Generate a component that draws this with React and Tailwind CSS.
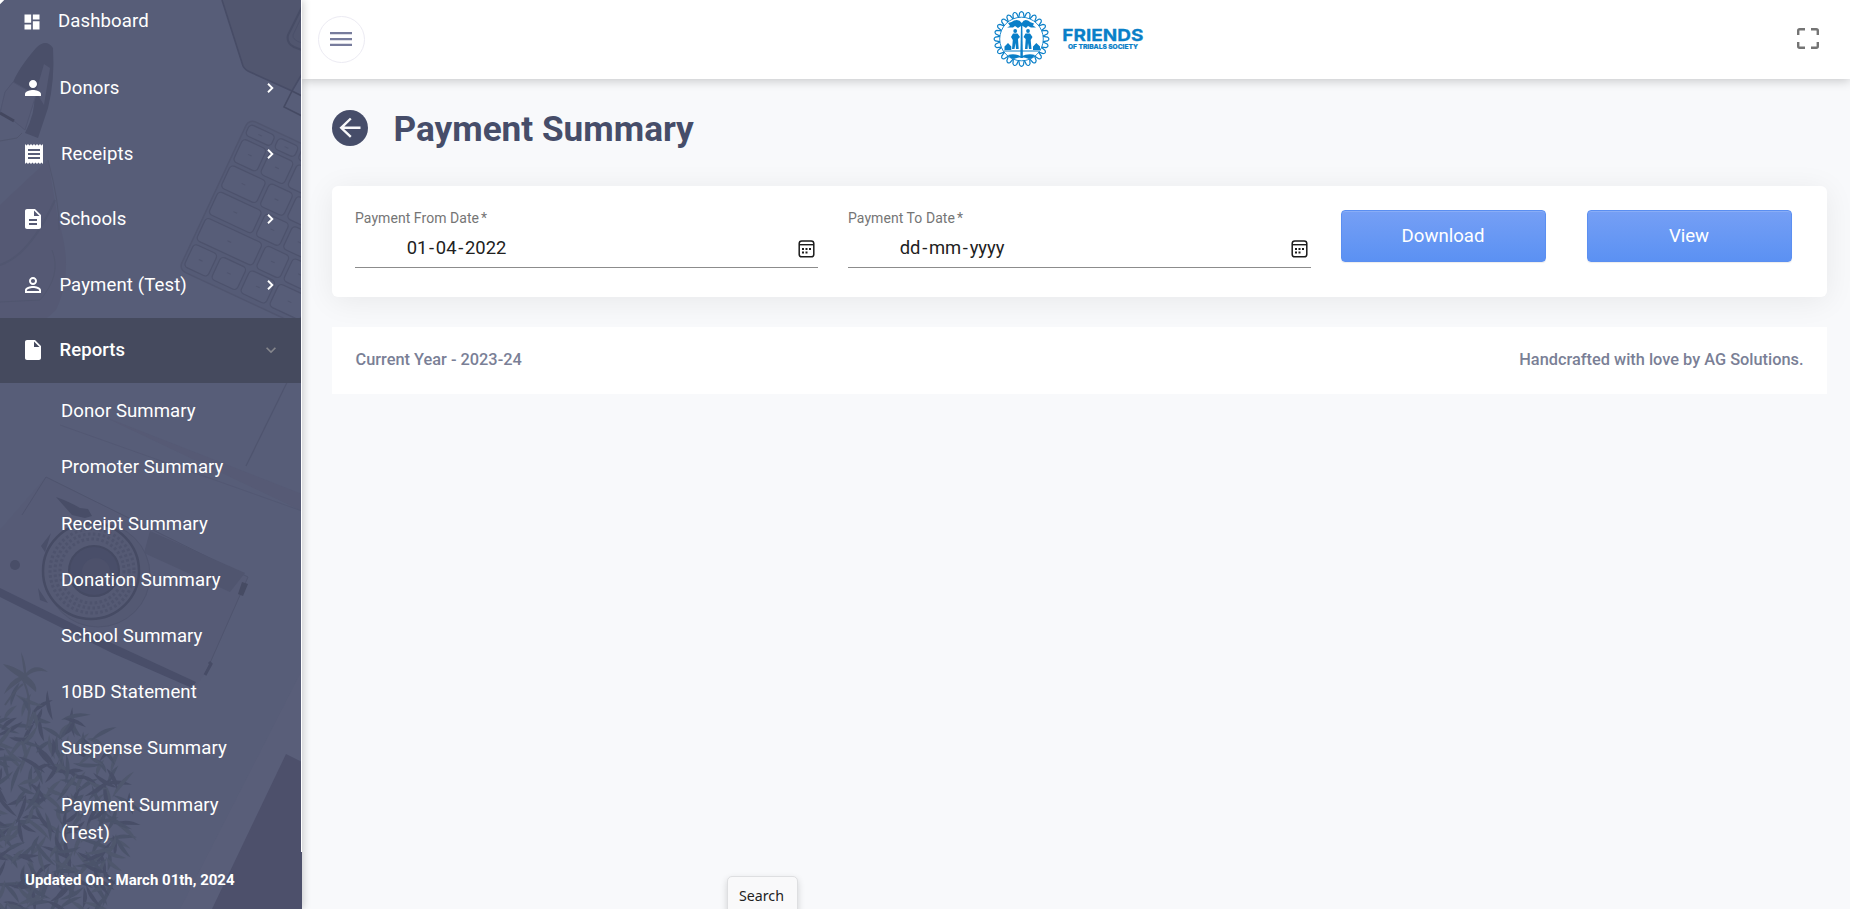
import React from "react";
import {
  MdDashboard,
  MdPerson,
  MdReceipt,
  MdPersonOutline,
  MdInsertDriveFile,
  MdDescription,
  MdKeyboardArrowDown,
} from "react-icons/md";

const menu = [
  { label: "Donors", Icon: MdPerson, pad: "pl-[21px]", gap: "pl-[14.4px]" },
  { label: "Receipts", Icon: MdReceipt, pad: "pl-[22px]", gap: "pl-[15px]" },
  { label: "Schools", Icon: MdDescription, pad: "pl-[21px]", gap: "pl-[14.4px]" },
  { label: "Payment (Test)", Icon: MdPersonOutline, pad: "pl-[21px]", gap: "pl-[14.4px]" },
];

const reports = [
  "Donor Summary",
  "Promoter Summary",
  "Receipt Summary",
  "Donation Summary",
  "School Summary",
  "10BD Statement",
  "Suspense Summary",
  "Payment Summary (Test)",
];

const keyRows = [
  { y: 4, h: 12, xs: [[3, 28], [35, 22], [61, 22]] },
  { y: 20, h: 25, xs: [[3, 26], [33, 26], [63, 26]] },
  { y: 49, h: 25, xs: [[3, 39], [46, 26], [76, 26], [106, 26]] },
  { y: 78, h: 25, xs: [[3, 48], [55, 26], [85, 26], [115, 26]] },
  { y: 107, h: 25, xs: [[3, 62], [69, 26], [99, 26], [129, 26]] },
  { y: 136, h: 25, xs: [[3, 26], [33, 28], [65, 28], [97, 34], [135, 30]] },
];

const LEAF_COUNT = 420;
const leaves = Array.from({ length: LEAF_COUNT }, (_, i) => {
  const a = (i * 137.5 * Math.PI) / 180;
  const r = Math.sqrt(i / LEAF_COUNT);
  return {
    x: 28 + Math.cos(a) * r * 102 + ((i * 29) % 13) - 6,
    y: 825 + Math.sin(a) * r * 122 + ((i * 17) % 15) - 7,
    rot: (i * i * 31 + i * 97) % 360,
    len: 18 + ((i * 7) % 17),
    tone: i % 3,
  };
});

function DeskArt() {
  return (
    <svg className="absolute inset-0" width="302" height="909" viewBox="0 0 302 909" fill="none">
      <rect width="302" height="909" fill="#575d78" />
      <path d="M0 205L48 160L58 220Q75 270 56 310Q30 335 0 335Z" fill="#555974" />
      <path d="M48 160Q60 205 59 230M52 250Q62 275 40 300L0 302" stroke="#51566f" />
      <path d="M0 265Q30 255 55 200" stroke="#515670" strokeWidth="2" />
      {/* watch */}
      <path d="M36 48Q46 38 53 48Q55 80 48 108L38 138L25 133Q36 112 34 95L12 85Q17 70 36 48Z" fill="#4a4f69" />
      <path d="M44 64L50 68L44 105L36 92Z" fill="#545974" />
      <path d="M5 92L13 82L36 95L25 130L14 121L0 113Z" fill="#565b76" stroke="#505570" />
      <path d="M0 113L14 121" stroke="#43475f" strokeWidth="3" />
      <path d="M0 141L17 138L22 133" stroke="#50556e" />
      {/* laptop and drive */}
      <path d="M222 0L243 66Q245 70 250 72L292 91L302 74V0Z" fill="#51566f" />
      <path d="M222 0L243 66Q245 70 250 72L292 91L302 74" stroke="#474c66" strokeWidth="1.6" />
      <path d="M302 7L288 35Q286 43 294 47L302 50" stroke="#474c65" strokeWidth="2" />
      <path d="M302 16L293 35Q292 40 302 43" stroke="#4b506a" />
      <path d="M292 91L284 107L302 116M292 91L302 96" stroke="#454a63" strokeWidth="1.6" />
      {/* keyboard */}
      <g transform="translate(249 119) rotate(25)">
        <rect width="220" height="166" rx="7" fill="#555b76" stroke="#50556f" strokeWidth="1.4" />
        {keyRows.map((row) =>
          row.xs.map(([x, w]) => (
            <g key={`${row.y}-${x}`}>
              <rect x={x} y={row.y} width={w} height={row.h} rx="4" fill="#575d78" stroke="#4d526c" strokeWidth="1.2" />
              <path d={`M${x + w / 2 - 2} ${row.y + row.h / 2}h4`} stroke="#4f546e" />
            </g>
          ))
        )}
      </g>
      <path d="M302 352L246 466" stroke="#4f546e" strokeWidth="1.2" />
      <path d="M100 415L302 494L302 511Z" fill="#565a75" />
      <path d="M60 425L302 511" stroke="#535873" />
      {/* camera */}
      <path d="M46 477L248 577L206 672L196 686L118 650L0 592V530Z" fill="#565b76" />
      <path d="M46 477L22 515M46 477L248 577L206 672" stroke="#4f546e" />
      <path d="M56 497Q70 502 80 508L88 509L92 516L85 518L72 515Z" fill="#484d67" />
      <path d="M150 531L245 573L230 592L144 553Z" fill="#50556f" />
      <path d="M242 582L248 584L243 596L238 594Z" fill="#464b63" />
      <path d="M0 588L118 646L196 682L192 688L112 653L0 597Z" fill="#494e69" />
      <path d="M209 662L211 664L205 675" stroke="#474c66" strokeWidth="3" />
      <circle cx="15" cy="565" r="5" fill="#494e68" />
      <path d="M41 546L51 533L45 552ZM38 588L48 603L40 600Z" fill="#4a4f69" />
      <circle cx="98" cy="575" r="52" fill="#545973" stroke="#4f546e" />
      <circle cx="91" cy="571" r="48" fill="#555a74" stroke="#464b64" strokeWidth="2.5" />
      <circle cx="92" cy="571" r="42" stroke="#4e536d" strokeWidth="3" strokeDasharray="2.5 2.5" />
      <circle cx="92" cy="571" r="37" stroke="#4e536d" strokeWidth="3" strokeDasharray="2.5 2.5" />
      <circle cx="92" cy="571" r="32" stroke="#4e536d" strokeWidth="3" strokeDasharray="2.5 2.5" />
      <circle cx="94" cy="571" r="25" fill="#494e69" stroke="#454a63" strokeWidth="2" />
      <circle cx="96" cy="572" r="14" fill="#4d516b" />
      {/* notebook */}
      <path d="M302 670L180 909H302Z" fill="#595e79" />
      <path d="M286 754L302 762V909H212Z" fill="#4d506b" />
      {/* plant */}
      {leaves.map((l, i) => (
        <path
          key={i}
          transform={`translate(${l.x} ${l.y}) rotate(${l.rot})`}
          d={`M0 0Q${l.len / 2} -7 ${l.len} 1Q${l.len / 2} 1 0 0Z`}
          fill={l.tone === 0 ? "#484e67" : l.tone === 1 ? "#4f576d" : "#4b536a"}
        />
      ))}
      <path d="M24 673Q22 660 21 652Q26 662 26 673Q36 662 48 672Q36 669 27 676Q38 684 36 692L22 680Q8 690 4 694Q10 680 19 677Q8 670 3 664Q14 666 24 673Z" fill="#4e556b" />
      <path d="M22 678Q34 700 26 730M5 705Q15 690 23 684" stroke="#4e556b" strokeWidth="2" />
    </svg>
  );
}

function Chevron() {
  return (
    <svg width="7" height="10" viewBox="0 0 7 10" fill="none" stroke="#fff" strokeWidth="1.9">
      <path d="M1 0.8L5.3 5L1 9.2" />
    </svg>
  );
}

function Sidebar() {
  return (
    <aside className="relative z-20 h-[909px] w-[302px] shrink-0 overflow-hidden text-white shadow-[1px_0_8px_rgba(0,0,0,0.2)]">
      <DeskArt />
      <div className="relative flex h-[852px] flex-col overflow-hidden border-r border-white text-[18.6px] tracking-[0.1px]">
        <div className="flex h-[55px] shrink-0 items-center pb-[12px] pl-[22px]">
          <MdDashboard size={20} />
          <span className="pl-[16px] pt-px">Dashboard</span>
        </div>
        {menu.map(({ label, Icon, pad, gap }) => (
          <div key={label} className={`flex h-[65.75px] shrink-0 items-center pr-[27px] ${pad}`}>
            <Icon size={24} />
            <span className={`grow pt-[2px] ${gap}`}>{label}</span>
            <Chevron />
          </div>
        ))}
        <div className="flex h-[65px] shrink-0 items-center bg-[#454a5e] pb-px pl-[21px] pr-[20px] font-medium">
          <MdInsertDriveFile size={24} />
          <span className="grow pl-[14.4px] pt-px text-[18.5px]">Reports</span>
          <MdKeyboardArrowDown size={20} className="text-[#85868c]" />
        </div>
        <div className="flex shrink-0 flex-col pt-[0.25px]">
          {reports.map((label) => (
            <div key={label} className="w-[260px] py-[14px] pl-[61px] leading-[28.2px] tracking-[0.06px]">
              {label}
            </div>
          ))}
        </div>
      </div>
      <div className="relative pl-[25px] pt-[17px] text-[15px] font-bold leading-[22px]">
        Updated On : March 01th, 2024
      </div>
      <div className="absolute left-[-3px] top-[-3px] size-[6px] rotate-45 bg-white" />
    </aside>
  );
}

const petals = Array.from({ length: 24 }, (_, i) => (i * 360) / 24);

function Logo() {
  return (
    <svg width="152" height="58" viewBox="992 10 152 58" fill="#0a7fc8">
      <g fill="none" stroke="#0a7fc8">
        <circle cx="1021.5" cy="39" r="21.8" strokeWidth="0.9" />
        {petals.map((a) => (
          <path
            key={a}
            transform={`rotate(${a} 1021.5 39)`}
            d="M1018.8 17.4L1019.6 13Q1021.5 10.2 1023.4 13L1024.2 17.4"
            strokeWidth="1.2"
          />
        ))}
      </g>
      <path d="M1021 24L1022.3 24L1022.9 58H1020.3Z" />
      <path d="M1021.8 23Q1019 18.5 1014 20.5Q1012 22 1008 23L1010 26L1007 27.5H1013L1015 26L1018 28L1021.8 25.5L1026 28L1028 26L1031 27.5H1036L1033 25.5L1034 23.5Q1030 22.5 1028 20.5Q1024 18.5 1021.8 23Z" />
      <circle cx="1015.2" cy="31" r="1.9" />
      <circle cx="1028" cy="31" r="1.9" />
      <path d="M1013 33.5H1017.5L1020 37L1018 39L1018.7 49H1016L1015.5 43L1014.5 49H1012L1012.8 40L1011 37Z" />
      <path d="M1025.5 33.5H1030L1032.5 37L1030.7 40L1031.5 49H1029L1028 43L1027.5 49H1025L1025.7 39L1023.5 37Z" />
      <path d="M1004.5 50V46.5L1008 43L1011.3 46.5V50ZM1033 50V46.5L1036.3 43L1040 46.5V50Z" />
      <path d="M1004 51H1039" stroke="#0a7fc8" strokeWidth="1" />
      <path d="M1008 55Q1015 53 1021 56.5Q1028 53 1035 55Q1033 58.5 1029 59Q1021.5 55.5 1014 59Q1010 58.5 1008 55Z" />
      <text x="1062.3" y="41.2" fontFamily="Inter, sans-serif" fontWeight="700" fontSize="16.6" stroke="#0a7fc8" strokeWidth=".3" textLength="81" lengthAdjust="spacingAndGlyphs">FRIENDS</text>
      <text x="1068" y="49.4" fontFamily="Inter, sans-serif" fontWeight="800" fontSize="6.6" stroke="#0a7fc8" strokeWidth=".2" textLength="70" lengthAdjust="spacingAndGlyphs">OF TRIBALS SOCIETY</text>
    </svg>
  );
}

function Header() {
  return (
    <header className="relative z-10 flex h-[79px] items-center bg-white pb-px pl-[16px] pr-[31px] shadow-[0_2px_10px_rgba(0,0,0,0.2)]">
      <button className="flex size-[47px] items-center justify-center rounded-full border border-[#ecebf3] pr-px">
        <svg width="22" height="14" viewBox="0 0 22 14" fill="#777c9c">
          <path d="M0 0h22v2.3H0zM0 5.9h22v2.3H0zM0 11.7h22v2.3H0z" />
        </svg>
      </button>
      <div className="ml-[627px] grow">
        <Logo />
      </div>
      <div className="pb-[2px]">
        <svg className="block" width="22" height="21" viewBox="0 0 22 21" fill="none" stroke="#747474" strokeWidth="2.4">
          <path d="M1.2 7V2.7Q1.2 1.2 2.7 1.2H8M14 1.2H19.3Q20.8 1.2 20.8 2.7V7M20.8 14V18.3Q20.8 19.8 19.3 19.8H14M8 19.8H2.7Q1.2 19.8 1.2 18.3V14" />
        </svg>
      </div>
    </header>
  );
}

function CalendarIcon() {
  return (
    <svg width="18" height="18" viewBox="0 0 18 18" fill="none" stroke="#1c1c1c">
      <rect x="1.2" y="1" width="14.6" height="15.8" rx="2.6" strokeWidth="1.5" />
      <path d="M1.2 4.7H15.8" strokeWidth="1.4" />
      <path d="M4 9h2M7.5 9h2M11 9h2M4 12.5h2M7.5 12.5h2" strokeWidth="2" />
    </svg>
  );
}

function DateField({ label, parts }) {
  return (
    <div className="flex h-[59px] w-[463px] flex-col border-b border-[#8c8c8c]">
      <div className="h-[20px] text-[14px] leading-[19px] tracking-[0.06px] text-[#757575]">
        {label}<span className="pl-[2px]">*</span>
      </div>
      <div className="flex grow items-center justify-between pl-[50.7px] pr-[2px]">
        <div className="flex text-[18.4px] leading-[26px] text-[#212121]">
          <span className="px-px">{parts[0]}</span>
          <span className="px-[0.7px]">-</span>
          <span className="px-px">{parts[1]}</span>
          <span className="px-[0.7px]">-</span>
          <span className="px-px">{parts[2]}</span>
        </div>
        <div className="pt-px">
          <CalendarIcon />
        </div>
      </div>
    </div>
  );
}

function ActionButton({ children }) {
  return (
    <button className="h-[52px] w-[205px] rounded-[4px] border border-[#5b8ff1] bg-linear-to-b from-[#759ff5] to-[#5b91f3] pr-px text-[18.6px] leading-[27px] text-white shadow-[inset_0_1px_0_rgba(255,255,255,0.15),0_1px_1px_rgba(0,0,0,0.075)]">
      {children}
    </button>
  );
}

export default function App() {
  return (
    <div className="relative flex h-[909px] w-[1850px] overflow-hidden bg-[#f8f9fb] font-['Roboto',sans-serif]">
      <Sidebar />
      <div className="flex grow flex-col">
        <Header />
        <main className="flex flex-col pl-[30px] pr-[23px]">
          <div className="flex h-[107px] items-center gap-[25.5px] pb-[9px]">
            <svg width="36" height="36" viewBox="0 0 36 36" fill="none">
              <circle cx="18" cy="18" r="18" fill="#464d69" />
              <path d="M28.5 17.8H9.2M18.8 8.5L9.2 17.8L18.8 26.8" stroke="#f8f9fb" strokeWidth="2.4" />
            </svg>
            <h1 className="pt-[2px] text-[35.15px] font-bold leading-[44px] text-[#464d69]">Payment Summary</h1>
          </div>
          <section className="flex h-[111px] rounded-[6px] bg-white pl-[23px] pt-[23px] shadow-[0_4px_30px_rgba(0,0,0,0.07)]">
            <div className="flex gap-[30px]">
              <DateField label="Payment From Date" parts={["01", "04", "2022"]} />
              <DateField label="Payment To Date" parts={["dd", "mm", "yyyy"]} />
            </div>
            <div className="ml-[30px] mt-px flex gap-[41px]">
              <ActionButton>Download</ActionButton>
              <ActionButton>View</ActionButton>
            </div>
          </section>
          <footer className="relative mt-[30px] flex h-[67px] items-center justify-between bg-white px-[23.5px] pb-px text-[16.35px] font-medium text-[#7a7f96]">
            <span>Current Year - 2023-24</span>
            <span>Handcrafted with love by AG Solutions.</span>
          </footer>
        </main>
      </div>
      <div className="absolute left-[727px] top-[876px] z-30 h-[40px] w-[71px] rounded-[5px] border border-[#dedfe1] bg-[#f9f9fa] pt-[8px] pr-[2px] text-center font-['Noto_Sans',sans-serif] text-[14.2px] leading-[22px] text-[#222] shadow-[0_3px_7px_rgba(0,0,0,0.16)]">
        Search
      </div>
    </div>
  );
}
